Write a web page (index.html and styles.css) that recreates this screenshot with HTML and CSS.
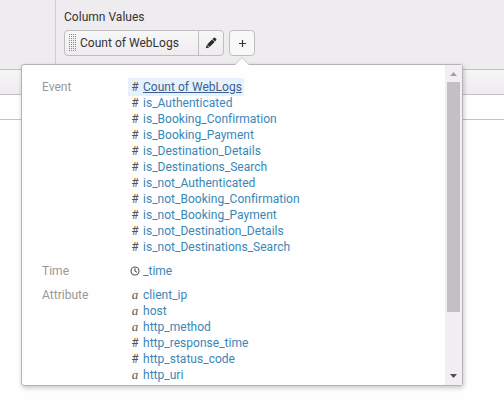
FILE: index.html
```html
<!DOCTYPE html>
<html lang="en">
<head>
<meta charset="utf-8">
<title>Column Values</title>
<link rel="stylesheet" href="styles.css">
</head>
<body>
<header class="toolbar">
  <div class="rows-pane"></div>
  <div class="columns-pane">
    <div class="label">Column Values</div>
    <div class="controls">
      <div class="pill">
        <span class="grip"></span>
        <span class="pill-text">Count of WebLogs</span>
        <span class="edit"><svg width="12" height="12" viewBox="0 0 12 12"><path d="M.8 11.2l1-3.4 2.4 2.6zM2.1 7.4l5-5 2.5 2.5-5 5zM7.5 2L8.9.7q.5-.4 1 0l1.4 1.4q.4.5 0 1L10 4.5z" fill="#292930"/></svg></span>
      </div>
      <div class="add"><svg width="9" height="9" viewBox="0 0 9 9"><path d="M4.5 1v7M1 4.5h7" stroke="#333" stroke-width="1.2"/></svg></div>
    </div>
  </div>
</header>
<div class="table-head"></div>
<div class="table-row"></div>

<div class="popup">
  <svg class="arrow" width="14" height="8" viewBox="0 0 14 8"><path d="M0 8L7 1l7 7z" fill="#fff"/><path d="M0 7.5L7 .7l7 6.8" fill="none" stroke="#c5c3c5" stroke-width=".8"/></svg>
  <div class="list">
    <section class="group">
      <h2>Event</h2>
      <ul>
        <li class="selected"><i>#</i><a>Count of WebLogs</a></li>
        <li><i>#</i><a>is_Authenticated</a></li>
        <li><i>#</i><a>is_Booking_Confirmation</a></li>
        <li><i>#</i><a>is_Booking_Payment</a></li>
        <li><i>#</i><a>is_Destination_Details</a></li>
        <li><i>#</i><a>is_Destinations_Search</a></li>
        <li><i>#</i><a>is_not_Authenticated</a></li>
        <li><i>#</i><a>is_not_Booking_Confirmation</a></li>
        <li><i>#</i><a>is_not_Booking_Payment</a></li>
        <li><i>#</i><a>is_not_Destination_Details</a></li>
        <li><i>#</i><a>is_not_Destinations_Search</a></li>
      </ul>
    </section>
    <section class="group">
      <h2>Time</h2>
      <ul>
        <li><i><svg width="10" height="10" viewBox="0 0 10 10"><path d="M5 2.3V5l1.9 1.4" fill="none" stroke="#555" stroke-width="1.1"/><circle cx="5" cy="5" r="4" fill="none" stroke="#555" stroke-width="1.1"/></svg></i><a>_time</a></li>
      </ul>
    </section>
    <section class="group">
      <h2>Attribute</h2>
      <ul>
        <li><i class="str">a</i><a>client_ip</a></li>
        <li><i class="str">a</i><a>host</a></li>
        <li><i class="str">a</i><a>http_method</a></li>
        <li><i>#</i><a>http_response_time</a></li>
        <li><i>#</i><a>http_status_code</a></li>
        <li><i class="str">a</i><a>http_uri</a></li>
      </ul>
    </section>
  </div>
  <div class="scrollbar">
    <svg width="7" height="4" viewBox="0 0 7 4"><path d="M0 4l3.5-4L7 4z" fill="#a3a1a3"/></svg>
    <div class="track"><div class="thumb"></div></div>
    <svg width="7" height="4" viewBox="0 0 7 4"><path d="M0 0h7L3.5 4z" fill="#504e50"/></svg>
  </div>
</div>
</body>
</html>
```
FILE: styles.css
```css
* { box-sizing: border-box; }
body {
  margin: 0;
  height: 409px;
  overflow: hidden;
  background: #fefefe;
  font: 12px/16px Roboto, sans-serif;
  letter-spacing: .02px;
  color: #333;
}
.toolbar { display: flex; height: 69px; background: #eeecee; }
.rows-pane { width: 56px; border-right: 1px solid #d0ced0; }
.columns-pane { padding: 9px 0 0 8px; }
.controls { display: flex; gap: 5px; margin-top: 5px; }
.pill, .add {
  display: flex;
  align-items: center;
  height: 26px;
  border: 1px solid #bfbdbf;
  border-radius: 4px;
}
.pill { width: 160px; background: linear-gradient(#f8f7f8, #eeecee); }
.grip {
  width: 8px;
  height: 18px;
  margin-left: 4px;
  background: conic-gradient(from 270deg at 1px 1px, #8c8a8c 90deg, transparent 0) 0 0 / 2px 2px;
}
.pill-text { flex: 1; margin-left: 3px; white-space: nowrap; }
.edit {
  display: flex;
  align-items: center;
  justify-content: center;
  width: 25px;
  height: 24px;
  border-left: 1px solid #bfbdbf;
}
.add { justify-content: center; width: 26px; background: #f9f8f9; }
.table-head {
  height: 26px;
  border: solid #c3c1c3;
  border-width: 1px 0;
  background: linear-gradient(#f7f6f7, #eeecee);
}
.table-row { height: 25px; border-bottom: 1px solid #c3c1c3; }
.popup {
  position: absolute;
  left: 21px;
  top: 64px;
  display: flex;
  width: 442px;
  height: 322px;
  border: 1px solid #b5b3b5;
  border-radius: 3px;
  background: #fefefe;
  box-shadow: 1px 2px 5px rgba(0, 0, 0, .22);
}
.arrow { position: absolute; left: 213px; top: -8px; }
.list { flex: 1; padding: 14px 0 0 20px; overflow: hidden; }
.group { display: flex; margin-bottom: 8px; }
.group h2 { width: 86px; margin: 0; font: inherit; color: #999; }
ul { margin: 0; padding: 0; list-style: none; }
li { display: flex; width: max-content; height: 16px; padding: 0 2px; }
li i {
  width: 10px;
  margin-right: 3px;
  font-style: normal;
  text-align: center;
  color: #555;
}
li i svg { display: block; margin-top: 3px; }
li .str { font: italic 13px/16px "Liberation Serif", serif; }
li a { color: #3a87b7; }
.selected { height: 18px; margin: -1px 0; padding-top: 1px; background: #e7f1fb; }
.selected a { color: #3b5f94; text-decoration: underline; }
.scrollbar {
  display: flex;
  flex-direction: column;
  align-items: center;
  width: 17px;
  padding: 7px 0;
  background: #f1eff1;
}
.track { flex: 1; width: 13px; padding-top: 6px; }
.thumb { height: 230px; background: #c2c0c2; }
```
